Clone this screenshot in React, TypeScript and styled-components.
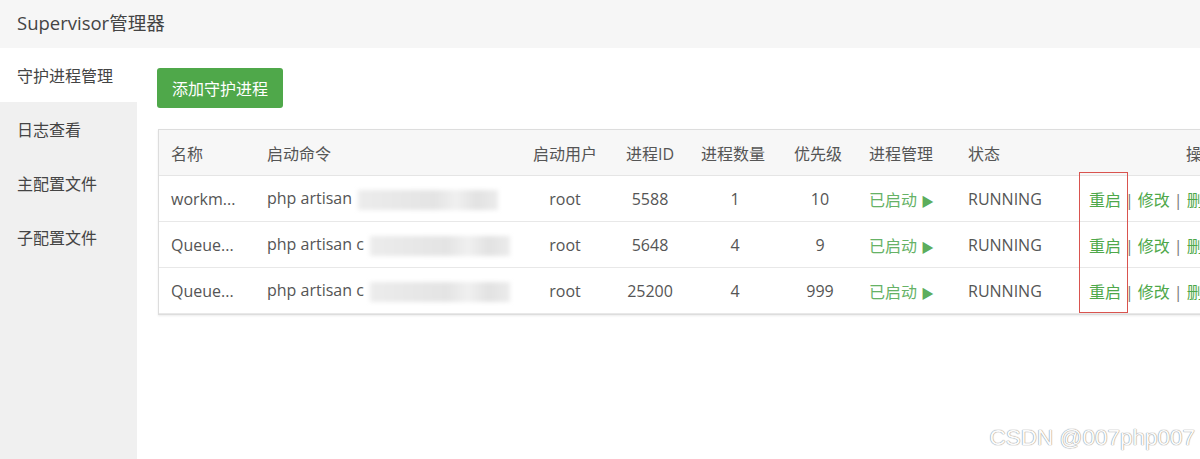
import styled, { createGlobalStyle } from "styled-components";

const GlobalStyle = createGlobalStyle`
    html, body {
        margin: 0;
        padding: 0;
        background: #fff;
        overflow: hidden;
    }
    body {
        font-family: "Open Sans", "Noto Sans CJK SC", sans-serif;
        color: #555;
    }
`;

const Page = styled.div`
    width: 1200px;
    height: 459px;
    display: flex;
    flex-direction: column;
    position: relative;
    overflow: hidden;
`;

const TopBar = styled.header`
    height: 48px;
    background: #f6f6f6;
    display: flex;
    align-items: center;
    padding-left: 17px;
    padding-bottom: 4px;
    box-sizing: border-box;
    font-size: 18.5px;
    color: #444;
`;

const Body = styled.div`
    flex: 1;
    display: flex;
`;

const Sidebar = styled.nav`
    width: 137px;
    background: #f0f0f0;
    display: flex;
    flex-direction: column;
`;

const NavItem = styled.div<{ $active?: boolean }>`
    height: 54px;
    display: flex;
    align-items: center;
    padding-left: 17px;
    font-size: 16px;
    color: #444;
    background: ${(p) => (p.$active ? "#fff" : "transparent")};
`;

const Content = styled.main`
    flex: 1;
    padding: 20px 0 0 20px;
    display: flex;
    flex-direction: column;
    align-items: flex-start;
    overflow: hidden;
`;

const AddButton = styled.button`
    width: 126px;
    height: 40px;
    border: none;
    border-radius: 3px;
    background: #4fa84a;
    color: #fff;
    font-family: "Noto Sans CJK SC", sans-serif;
    font-size: 16px;
    cursor: pointer;
`;

const TableWrap = styled.div`
    margin-top: 21px;
    margin-left: 1px;
    position: relative;
    border: 1px solid #ddd;
    box-shadow: 0 1px 2px rgba(0, 0, 0, 0.08);
`;

const Table = styled.table`
    border-collapse: collapse;
    table-layout: fixed;
    width: 1260px;
    font-size: 16px;
`;

const HeadRow = styled.tr`
    background: #f7f7f7;
`;

const Th = styled.th<{ $align?: string; $pad?: number }>`
    height: 45px;
    padding: 0 0 0 ${(p) => p.$pad ?? 12}px;
    text-align: ${(p) => p.$align ?? "left"};
    font-weight: normal;
    color: #555;
    border-bottom: 1px solid #e5e5e5;
    white-space: nowrap;
`;

const Td = styled.td<{ $align?: string; $pad?: number }>`
    height: 45px;
    padding: 0 0 0 ${(p) => p.$pad ?? 12}px;
    text-align: ${(p) => p.$align ?? "left"};
    color: #555;
    border-bottom: 1px solid #e8e8e8;
    white-space: nowrap;
    overflow: hidden;
`;

const Redacted = styled.span`
    display: inline-block;
    vertical-align: middle;
    width: 140px;
    height: 20px;
    margin-left: 6px;
    background: linear-gradient(90deg, #ececec 0%, #e4e4e4 55%, #f0f0f0 70%, #e2e2e2 85%, #ececec 100%);
    filter: blur(2px);
`;

const Started = styled.span`
    color: #66b266;
    font-family: "Noto Sans CJK SC", sans-serif;
`;

const Play = styled.span`
    color: #5cad5c;
    font-size: 13px;
    margin-left: 4px;
`;

const Link = styled.span`
    color: #4ea84a;
    font-family: "Noto Sans CJK SC", sans-serif;
`;

const Sep = styled.span`
    color: #777;
    margin: 0 4px;
`;

const Highlight = styled.div`
    position: absolute;
    left: 920px;
    top: 42px;
    width: 47px;
    height: 139px;
    border: 1.5px solid #d9534f;
    pointer-events: none;
`;

const Watermark = styled.div`
    position: absolute;
    right: 5px;
    bottom: 8px;
    font-family: "Liberation Sans", sans-serif;
    font-size: 22.5px;
    color: #fbfbfb;
    text-shadow: 0 0 1px #888, 0 0 1px #999;
    white-space: nowrap;
`;

const WatermarkUrl = styled.span`
    position: absolute;
    right: 0;
    bottom: -2px;
    font-size: 20px;
    color: rgba(230, 230, 230, 0.7);
    text-shadow: none;
    z-index: -1;
`;

type Proc = {
    name: string;
    cmd: string;
    pid: string;
    count: number;
    priority: number;
};

const procs: Proc[] = [
    { name: "workm...", cmd: "php artisan", pid: "5588", count: 1, priority: 10 },
    { name: "Queue...", cmd: "php artisan c", pid: "5648", count: 4, priority: 9 },
    { name: "Queue...", cmd: "php artisan c", pid: "25200", count: 4, priority: 999 },
];

function App() {
    return (
        <Page>
            <GlobalStyle />
            <TopBar>Supervisor管理器</TopBar>
            <Body>
                <Sidebar>
                    <NavItem $active>守护进程管理</NavItem>
                    <NavItem>日志查看</NavItem>
                    <NavItem>主配置文件</NavItem>
                    <NavItem>子配置文件</NavItem>
                </Sidebar>
                <Content>
                    <AddButton>添加守护进程</AddButton>
                    <TableWrap>
                        <Table>
                            <colgroup>
                                <col style={{ width: 96 }} />
                                <col style={{ width: 264 }} />
                                <col style={{ width: 92 }} />
                                <col style={{ width: 78 }} />
                                <col style={{ width: 88 }} />
                                <col style={{ width: 82 }} />
                                <col style={{ width: 99 }} />
                                <col style={{ width: 110 }} />
                                <col />
                            </colgroup>
                            <thead>
                                <HeadRow>
                                    <Th>名称</Th>
                                    <Th>启动命令</Th>
                                    <Th $align="center" $pad={0}>启动用户</Th>
                                    <Th $align="center" $pad={0}>进程ID</Th>
                                    <Th $align="center" $pad={0}>进程数量</Th>
                                    <Th $align="center" $pad={0}>优先级</Th>
                                    <Th $pad={10}>进程管理</Th>
                                    <Th $pad={10}>状态</Th>
                                    <Th $pad={118}>操作</Th>
                                </HeadRow>
                            </thead>
                            <tbody>
                                {procs.map((p, i) => (
                                    <tr key={i}>
                                        <Td>{p.name}</Td>
                                        <Td>
                                            {p.cmd}
                                            <Redacted />
                                        </Td>
                                        <Td $align="center" $pad={0}>root</Td>
                                        <Td $align="center" $pad={0}>{p.pid}</Td>
                                        <Td $align="center" $pad={4}>{p.count}</Td>
                                        <Td $align="center" $pad={4}>{p.priority}</Td>
                                        <Td $pad={10}>
                                            <Started>已启动</Started>
                                            <Play>▶</Play>
                                        </Td>
                                        <Td $pad={10}>RUNNING</Td>
                                        <Td $pad={21}>
                                            <Link>重启</Link>
                                            <Sep>|</Sep>
                                            <Link>修改</Link>
                                            <Sep>|</Sep>
                                            <Link>删除</Link>
                                            <Sep>|</Sep>
                                            <Link>停止</Link>
                                        </Td>
                                    </tr>
                                ))}
                            </tbody>
                        </Table>
                        <Highlight />
                    </TableWrap>
                </Content>
            </Body>
            <Watermark>
                CSDN @007php007
                <WatermarkUrl>https://blog.csdn.net/weixin_</WatermarkUrl>
            </Watermark>
        </Page>
    );
}

export default App;
